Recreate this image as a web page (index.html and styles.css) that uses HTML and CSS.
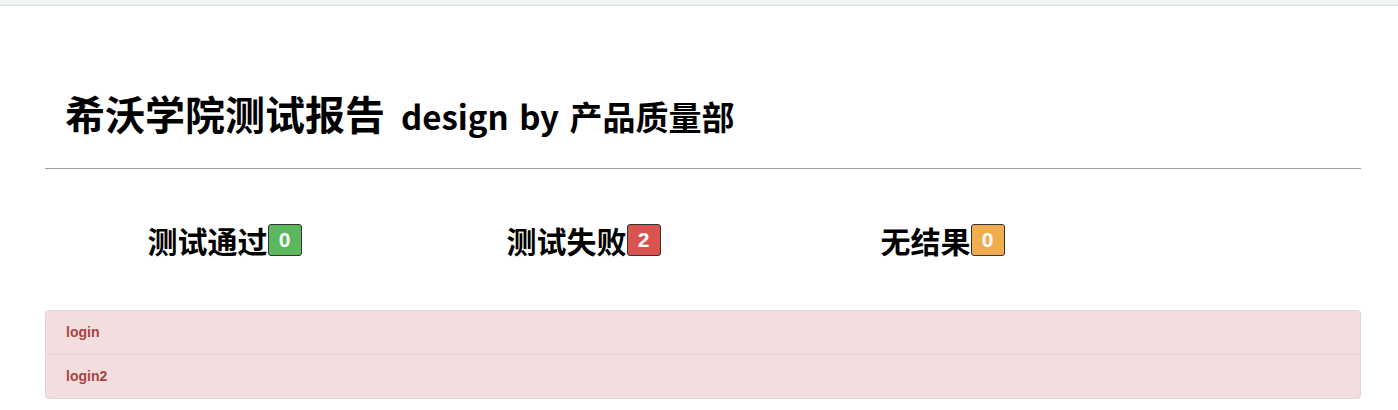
FILE: index.html
```html
<!DOCTYPE html>
<html lang="zh">
<head>
<meta charset="utf-8">
<title>希沃学院测试报告</title>
<link rel="stylesheet" href="styles.css">
</head>
<body>
<div class="topbar"></div>
<div class="container">
  <div class="header">
    <h1 class="title">希沃学院测试报告<span class="sub">design by 产品质量部</span></h1>
  </div>
  <hr class="rule">
  <div class="stats">
    <div class="stat"><span class="label">测试通过</span><span class="badge pass">0</span></div>
    <div class="stat"><span class="label">测试失败</span><span class="badge fail">2</span></div>
    <div class="stat"><span class="label">无结果</span><span class="badge none">0</span></div>
  </div>
  <div class="panel">
    <div class="row">login</div>
    <div class="row">login2</div>
  </div>
</div>
</body>
</html>
```

FILE: styles.css
```css
html, body {
  margin: 0;
  padding: 0;
  background: #ffffff;
  font-family: "Noto Sans CJK SC", "Noto Sans", sans-serif;
  color: #000;
}
.topbar {
  height: 5px;
  background: #f0f4f2;
  border-bottom: 1px solid #d8dcda;
}
.container {
  margin: 0 37px 0 45px;
}
.header {
  padding: 72px 0 0 20px;
  height: 90px;
}
.title {
  margin: 0;
  font-size: 40px;
  line-height: 70px;
  font-weight: 700;
}
.sub {
  font-size: 33px;
  margin-left: 16px;
  word-spacing: 3px;
}
.rule {
  margin: 0;
  border: 0;
  border-top: 1px solid #a0a0a0;
  height: 0;
}
.stats {
  display: grid;
  grid-template-columns: 359px 359px 359px;
  height: 141px;
  align-items: center;
}
.stat {
  display: flex;
  justify-content: center;
  align-items: center;
}
.label {
  font-size: 30px;
  font-weight: 700;
  line-height: 40px;
}
.badge {
  display: inline-flex;
  align-items: center;
  justify-content: center;
  box-sizing: border-box;
  width: 34px;
  height: 32px;
  border: 1px solid #333;
  border-radius: 3px;
  color: #fff;
  font-family: "Liberation Sans", Arial, sans-serif;
  font-weight: 700;
  font-size: 21px;
}
.pass { background: #5cb85c; }
.fail { background: #d9534f; }
.none { background: #f0ad4e; }
.panel {
  background: #f2dede;
  border: 1px solid #e3d4d6;
  border-radius: 4px;
}
.row {
  height: 43px;
  line-height: 43px;
  padding-left: 20px;
  font-family: "Liberation Sans", Arial, sans-serif;
  font-size: 14px;
  font-weight: 700;
  color: #a94442;
}
.row + .row {
  border-top: 1px solid #e3d4d6;
}
```
